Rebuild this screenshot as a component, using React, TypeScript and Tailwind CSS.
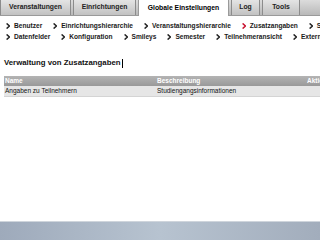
import React from "react";

const tabs = [
  { label: "Veranstaltungen", w: "w-[71px]", active: false },
  { label: "Einrichtungen", w: "w-[63px]", active: false },
  { label: "Globale Einstellungen", w: "w-[91px]", active: true },
  { label: "Log", w: "w-[29px]", active: false },
  { label: "Tools", w: "w-[38px]", active: false },
];

const navRows = [
  [
    { label: "Benutzer" },
    { label: "Einrichtungshierarchie" },
    { label: "Veranstaltungshierarchie" },
    { label: "Zusatzangaben", active: true },
    { label: "Studiengänge" },
  ],
  [
    { label: "Datenfelder" },
    { label: "Konfiguration" },
    { label: "Smileys" },
    { label: "Semester" },
    { label: "Teilnehmeransicht" },
    { label: "Externe Seiten" },
  ],
];

const Chevron = ({ red }: { red?: boolean }) => (
  <svg width="4" height="6" viewBox="0 0 4 6" className="shrink-0">
    <path
      d="M0.6 0.4 L3.4 3 L0.6 5.6"
      fill="none"
      stroke={red ? "#c8102e" : "#222"}
      strokeWidth="1.4"
    />
  </svg>
);

const App = () => {
  return (
    <div className="w-[320px] h-[240px] overflow-hidden bg-white flex flex-col font-['Liberation_Sans',Arial,sans-serif] text-[#111]">
      {/* reiter */}
      <div className="h-[16px] flex items-end bg-gradient-to-b from-[#dcdcdc] to-[#b9b9b9] border-b border-[#9a9a9a] shrink-0">
        {tabs.map((t) => (
          <div
            key={t.label}
            className={`${t.w} h-[15px] mr-[2px] flex items-center justify-center text-[6.8px] font-bold whitespace-nowrap border-x shrink-0 ${
              t.active
                ? "bg-white border-[#9a9a9a] h-[16px] -mb-px text-black"
                : "bg-gradient-to-b from-[#e4e4e4] to-[#c2c2c2] border-[#8c8c8c] text-[#222]"
            }`}
          >
            {t.label}
          </div>
        ))}
      </div>

      {/* unternavigation */}
      <div className="pt-[4px] shrink-0 overflow-hidden">
        {navRows.map((row, i) => (
          <div key={i} className="h-[11.5px] flex items-center pl-[6px] whitespace-nowrap">
            {row.map((n) => (
              <div key={n.label} className="flex items-center mr-[11px] shrink-0">
                <Chevron red={n.active} />
                <span className="ml-[4px] text-[6.6px] font-bold text-[#1a1a1a]">{n.label}</span>
              </div>
            ))}
          </div>
        ))}
      </div>

      <div className="mt-[15px] pl-[4px] flex items-center h-[10px] shrink-0">
        <h1 className="text-[7.8px] font-bold text-[#111]">Verwaltung von Zusatzangaben</h1>
        <span className="w-px h-[9px] bg-black ml-px"></span>
      </div>

      <div className="mt-[8px] ml-[4px] shrink-0 overflow-hidden">
        <div className="h-[10px] flex items-center bg-gradient-to-b from-[#b4b4b4] to-[#999] text-white text-[6.5px] font-bold whitespace-nowrap">
          <div className="w-[153px] pl-[1px] shrink-0">Name</div>
          <div className="w-[150px] shrink-0">Beschreibung</div>
          <div className="shrink-0">Aktion</div>
        </div>
        <div className="h-[11px] flex items-center bg-[#e6e6e6] border-b border-[#d4d4d4] text-[6.5px] text-[#111] whitespace-nowrap">
          <div className="w-[153px] pl-[1px] shrink-0">Angaben zu Teilnehmern</div>
          <div className="w-[150px] shrink-0">Studiengangsinformationen</div>
          <div className="shrink-0"></div>
        </div>
      </div>

      <div className="flex-1"></div>

      <div className="h-[19px] shrink-0 border-t border-[#cfd5dc] bg-gradient-to-r from-[#9eaabb] via-[#b7c3d0] to-[#a2adbc]"></div>
    </div>
  );
};

export default App;
